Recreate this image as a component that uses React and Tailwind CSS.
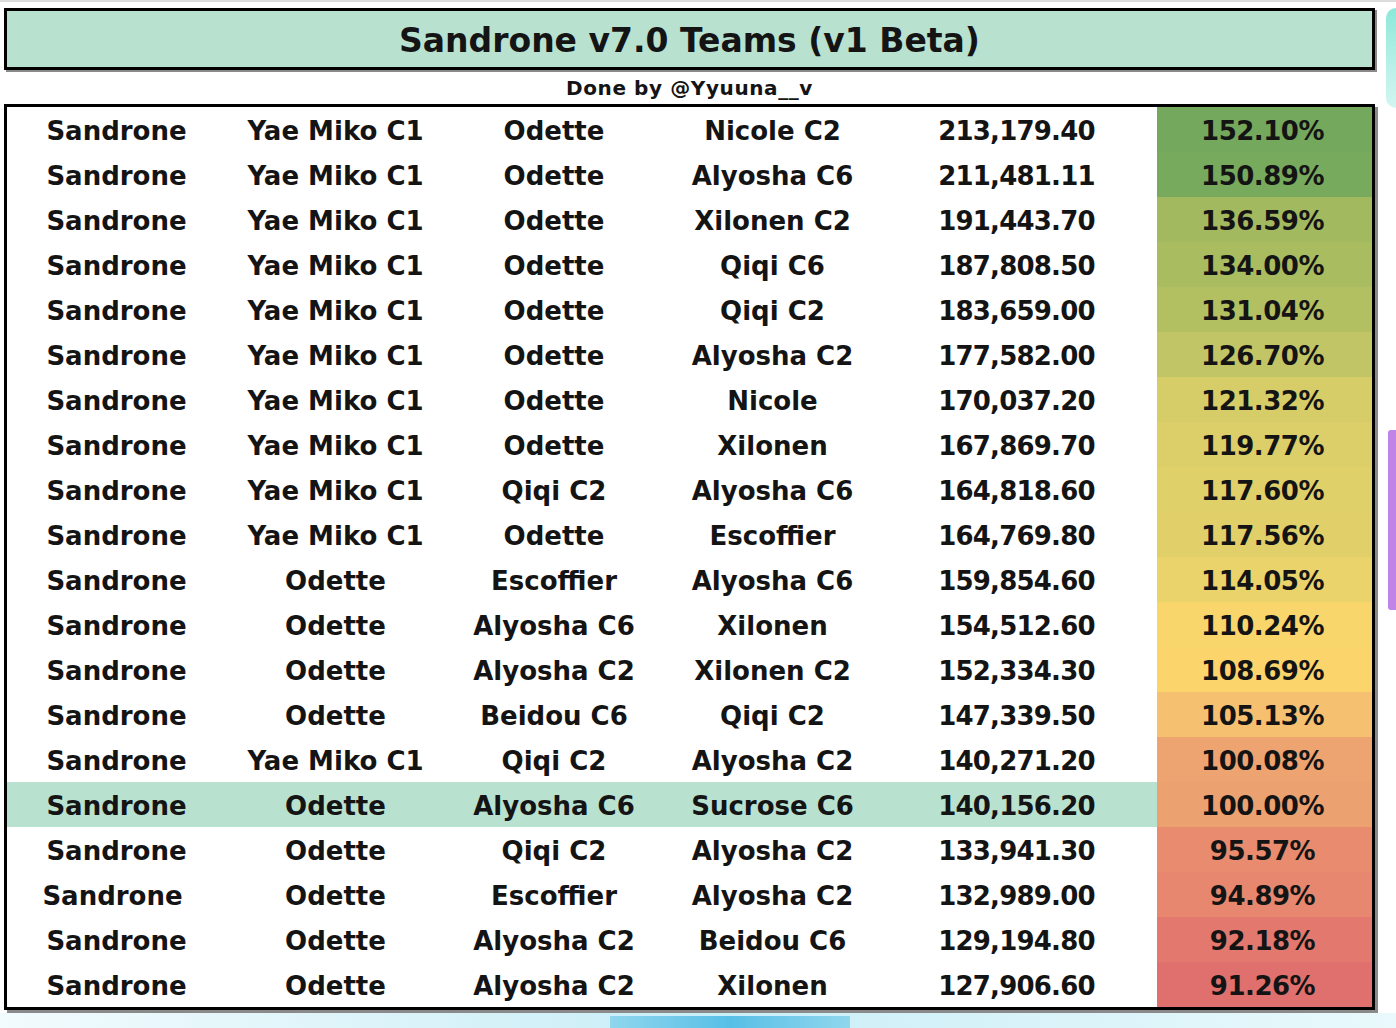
import React from "react";

const rows = [
  ["Sandrone", "Yae Miko C1", "Odette", "Nicole C2", "213,179.40", "152.10%", "#74a85c"],
  ["Sandrone", "Yae Miko C1", "Odette", "Alyosha C6", "211,481.11", "150.89%", "#77aa5c"],
  ["Sandrone", "Yae Miko C1", "Odette", "Xilonen C2", "191,443.70", "136.59%", "#a3b960"],
  ["Sandrone", "Yae Miko C1", "Odette", "Qiqi C6", "187,808.50", "134.00%", "#a9bc60"],
  ["Sandrone", "Yae Miko C1", "Odette", "Qiqi C2", "183,659.00", "131.04%", "#b3c062"],
  ["Sandrone", "Yae Miko C1", "Odette", "Alyosha C2", "177,582.00", "126.70%", "#c2c565"],
  ["Sandrone", "Yae Miko C1", "Odette", "Nicole", "170,037.20", "121.32%", "#d6cd69"],
  ["Sandrone", "Yae Miko C1", "Odette", "Xilonen", "167,869.70", "119.77%", "#dccf69"],
  ["Sandrone", "Yae Miko C1", "Qiqi C2", "Alyosha C6", "164,818.60", "117.60%", "#e0d06a"],
  ["Sandrone", "Yae Miko C1", "Odette", "Escoffier", "164,769.80", "117.56%", "#e1d06a"],
  ["Sandrone", "Odette", "Escoffier", "Alyosha C6", "159,854.60", "114.05%", "#ead36b"],
  ["Sandrone", "Odette", "Alyosha C6", "Xilonen", "154,512.60", "110.24%", "#f8d66b"],
  ["Sandrone", "Odette", "Alyosha C2", "Xilonen C2", "152,334.30", "108.69%", "#fbd46c"],
  ["Sandrone", "Odette", "Beidou C6", "Qiqi C2", "147,339.50", "105.13%", "#f5c171"],
  ["Sandrone", "Yae Miko C1", "Qiqi C2", "Alyosha C2", "140,271.20", "100.08%", "#eda470"],
  ["Sandrone", "Odette", "Alyosha C6", "Sucrose C6", "140,156.20", "100.00%", "#eca170", true],
  ["Sandrone", "Odette", "Qiqi C2", "Alyosha C2", "133,941.30", "95.57%", "#e88b6f"],
  ["Sandrone", "Odette", "Escoffier", "Alyosha C2", "132,989.00", "94.89%", "#e8876f", false, true],
  ["Sandrone", "Odette", "Alyosha C2", "Beidou C6", "129,194.80", "92.18%", "#e2786e"],
  ["Sandrone", "Odette", "Alyosha C2", "Xilonen", "127,906.60", "91.26%", "#e0706e"],
];

export default function App() {
  return (
    <div
      className="relative w-[1396px] h-[1028px] overflow-hidden bg-white text-[#141414]"
      style={{ fontFamily: "'DejaVu Sans', 'Liberation Sans', sans-serif" }}
    >
      <div className="h-[2px] bg-[#dcdcdc]" />
      <div className="pl-[4px] pt-[6px]">
        <div className="w-[1371px] h-[62px] border-[3px] border-black bg-[#b9e1d0] shadow-[2px_2px_0_#8a8a8a] flex items-center justify-center">
          <span className="text-[33px] font-bold leading-none pt-[3px]">
            Sandrone v7.0 Teams (v1 Beta)
          </span>
        </div>
        <div className="w-[1371px] h-[34px] flex items-center justify-center">
          <span className="text-[20px] font-bold leading-none tracking-[0.6px] pt-[2px]">
            Done by @Yyuuna__v
          </span>
        </div>
        <div className="w-[1371px] border-[3px] border-black shadow-[3px_3px_0_#8a8a8a] bg-white">
          {rows.map((r, i) => (
            <div
              key={i}
              className={`flex h-[45px] items-center text-[26px] font-bold leading-none pt-[2px] ${
                r[7] ? "bg-[#b9e1d0]" : ""
              }`}
            >
              <div className={`w-[219px] text-center ${r[8] ? "pr-[8px]" : ""}`}>{r[0]}</div>
              <div className="w-[219px] text-center">{r[1]}</div>
              <div className="w-[218px] text-center">{r[2]}</div>
              <div className="w-[219px] text-center">{r[3]}</div>
              <div className="w-[275px] text-center pr-[6px] tracking-[-0.8px]">{r[4]}</div>
              <div
                className="w-[215px] h-[45px] -mt-[2px] pt-[2px] flex items-center justify-center pr-[4px] tracking-[-0.5px]"
                style={{ backgroundColor: r[6] }}
              >
                {r[5]}
              </div>
            </div>
          ))}
        </div>
      </div>
      <div className="absolute right-0 top-[8px] w-[10px] h-[100px] rounded-l-full bg-gradient-to-b from-[#6fe3d0] to-[#c8f3ee] opacity-80" />
      <div className="absolute right-0 top-[430px] w-[8px] h-[180px] bg-[#c083e8] rounded-l-[3px]" />
      <div className="absolute left-0 right-0 bottom-0 h-[15px] bg-gradient-to-r from-[#f2fbfd] via-[#c9eef7] to-[#e9f9fc]" />
      <div className="absolute left-[610px] bottom-0 w-[240px] h-[12px] bg-gradient-to-r from-[#8fd6ee] via-[#56bfe6] to-[#8fd6ee]" />
    </div>
  );
}
